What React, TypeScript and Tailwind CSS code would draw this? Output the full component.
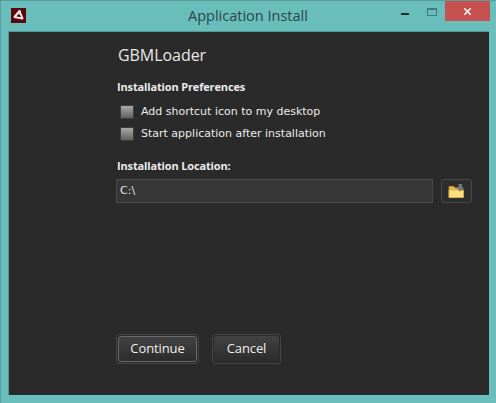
import { X } from "lucide-react"

const segoe = "font-['Open_Sans','Noto_Sans',sans-serif]"

function Logo() {
  return (
    <svg width="15" height="15" viewBox="0 0 15 15" className="block">
      <rect width="15" height="15" fill="#5a0a0c" />
      <path d="M8.5 3 L3.5 9 L11.5 10.5 Z" fill="none" stroke="#f3e6e6" strokeWidth="2" strokeLinejoin="round" />
      <path d="M8.5 2.5 V6.5" stroke="#f3e6e6" strokeWidth="2" />
      <circle cx="8" cy="8" r="1" fill="#5a0a0c" />
    </svg>
  )
}

function FolderIcon() {
  return (
    <svg width="17" height="15" viewBox="0 0 17 15" className="block">
      <path d="M1 4 V2.5 H6 L7 4 H12 V13.5 H1 Z" fill="#e6b94f" stroke="#c4962f" strokeWidth="0.8" />
      <path d="M1 6 H15.5 V13.5 H1 Z" fill="#ffdf80" stroke="#e0b048" strokeWidth="0.8" />
      <path d="M10.5 0 H14 V3.5 H16.5 L12.2 7.5 L8 3.5 H10.5 Z" fill="#77777a" />
    </svg>
  )
}

function Check({ label }: { label: string }) {
  return (
    <label className="flex items-center h-[22px]">
      <span className="w-[14px] h-[14px] ml-[4px] mr-[7px] bg-gradient-to-b from-[#a9a9a9] to-[#626262] border border-[#3c3c3c]" />
      <span className="text-[11px] text-[#ececec] font-['DejaVu_Sans',sans-serif]">{label}</span>
    </label>
  )
}

export default function App() {
  return (
    <div className={`w-[496px] h-[403px] bg-[#69bdbb] border-t border-l border-[#5a9c9c] flex flex-col overflow-hidden ${segoe}`}>
      <div className="h-[30px] shrink-0 flex items-start relative">
        <div className="ml-[10px] mt-[7px]">
          <Logo />
        </div>
        <div className="absolute left-[187px] top-[5px] text-[14.5px] leading-[20px] text-[#29464d]">Application Install</div>
        <div className="ml-auto flex items-start mr-[6px]">
          <div className="w-[8px] h-[2px] bg-[#1f2a2c] mt-[12px] mr-[18px]" />
          <div className="w-[10px] h-[8px] border border-[#46797f] border-t-2 mt-[7px] mr-[8px]" />
          <div className="w-[45px] h-[20px] bg-[#c75050] flex items-center justify-center">
            <X size={11} strokeWidth={3.2} color="#ffffff" />
          </div>
        </div>
      </div>

      <div className="ml-[7px] mr-[7px] h-[364px] bg-[#2a2a2a] border border-[#4f9a98] border-b-0 border-r-0 pl-[107px] pr-[16px] flex flex-col">
        <h1 className="ml-[2px] mt-[11px] text-[16px] tracking-[-0.05px] leading-[24px] text-[#e8e8e8]">GBMLoader</h1>
        <div className="ml-[1px] mt-[12px] text-[11px] tracking-[-0.15px] leading-[16px] font-bold text-[#ececec]">Installation Preferences</div>
        <div className="mt-[6px] flex flex-col">
          <Check label="Add shortcut icon to my desktop" />
          <Check label="Start application after installation" />
        </div>
        <div className="ml-[1px] mt-[13px] text-[11px] tracking-[-0.15px] leading-[16px] font-bold text-[#ececec]">Installation Location:</div>
        <div className="mt-[5px] flex gap-[8px]">
          <div className="w-[317px] h-[24px] bg-[#363636] border border-[#4a4a4a] flex items-center pl-[3px] text-[11px] text-[#e4e4e4] font-['DejaVu_Sans',sans-serif]">C:\</div>
          <button className="w-[31px] h-[24px] rounded-[3px] border border-[#484848] bg-[#2e2e2e] flex items-center justify-center">
            <FolderIcon />
          </button>
        </div>
        <div className="mt-[131px] flex gap-[13px]">
          <button className="w-[83px] h-[30px] rounded-[3px] border border-[#454545] p-[1px]">
            <span className="w-full h-full rounded-[3px] border border-[#6a6a6a] bg-gradient-to-b from-[#424242] to-[#2c2c2c] flex items-center justify-center text-[13px] tracking-[-0.1px] text-[#efefef]">Continue</span>
          </button>
          <button className="w-[69px] h-[30px] rounded-[3px] border border-[#454545] p-[1px]">
            <span className="w-full h-full rounded-[3px] bg-gradient-to-b from-[#424242] to-[#2c2c2c] flex items-center justify-center text-[13px] tracking-[-0.1px] text-[#efefef]">Cancel</span>
          </button>
        </div>
      </div>
    </div>
  )
}
